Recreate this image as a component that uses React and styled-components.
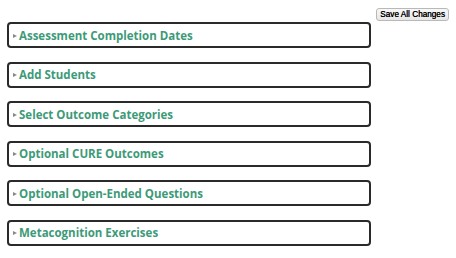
import React from 'react'
import styled, {createGlobalStyle} from 'styled-components'

const sections = [
    'Assessment Completion Dates',
    'Add Students',
    'Select Outcome Categories',
    'Optional CURE Outcomes',
    'Optional Open-Ended Questions',
    'Metacognition Exercises',
]

const App = () => (
    <>
        <GlobalStyle />
        <Page>
            <TopBar>
                <SaveButton>Save All Changes</SaveButton>
            </TopBar>
            <SectionList>
                {sections.map(title => (
                    <Section key={title}>
                        <Arrow />
                        <SectionTitle>{title}</SectionTitle>
                    </Section>
                ))}
            </SectionList>
        </Page>
    </>
)
export default App

const GlobalStyle = createGlobalStyle`
    body {
        margin: 0;
        background: #fff;
        font-family: "Open Sans", "Liberation Sans", sans-serif;
    }
`;
const Page = styled.div`
    width: 456px;
    height: 258px;
    box-sizing: border-box;
    padding: 8px 7px 0 7px;
`;
const TopBar = styled.div`
    display: flex;
    justify-content: flex-end;
    height: 14px;
`;
const SaveButton = styled.button`
    height: 13px;
    padding: 0 3px;
    font-family: "Liberation Sans", Arial, sans-serif;
    font-size: 8.2px;
    color: #000;
    background: linear-gradient(#f8f8f8, #e6e6e6);
    border: 1px solid #b8b8b8;
    border-radius: 3px;
    line-height: 11px;
    text-shadow: 0 0 0.4px #000;
`;
const SectionList = styled.div`
    display: flex;
    flex-direction: column;
    gap: 13.5px;
    width: 364px;
`;
const Section = styled.div`
    display: flex;
    align-items: center;
    height: 26px;
    box-sizing: border-box;
    border: 2px solid #2a2a2a;
    border-radius: 4px;
    padding-left: 4px;
    background: #fff;
`;
const Arrow = styled.span`
    width: 0;
    height: 0;
    border-top: 2.5px solid transparent;
    border-bottom: 2.5px solid transparent;
    border-left: 4px solid #888;
    margin-right: 2px;
    margin-top: 1px;
`;
const SectionTitle = styled.span`
    font-size: 11.5px;
    font-weight: 700;
    color: #3d9a78;
`;
